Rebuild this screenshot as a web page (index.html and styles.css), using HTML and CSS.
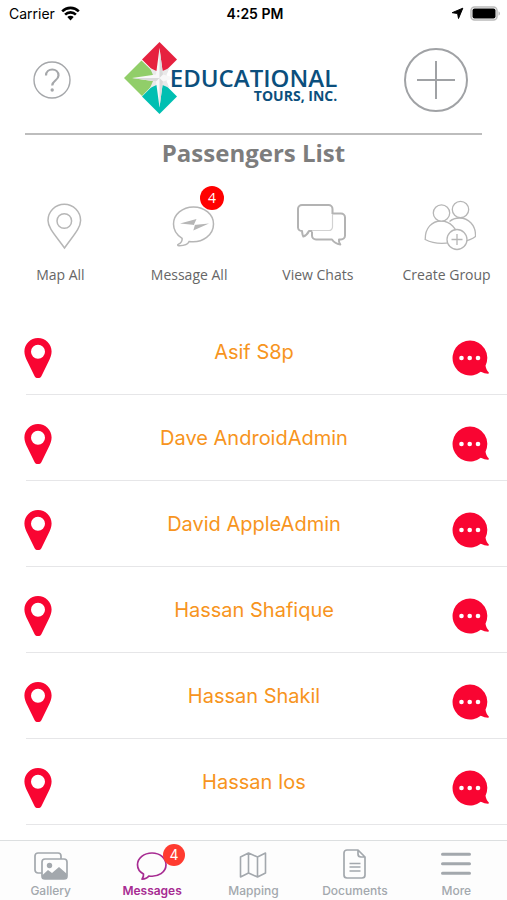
FILE: index.html
```html
<!DOCTYPE html>
<html lang="en">
<head>
<meta charset="utf-8">
<meta name="viewport" content="width=device-width, initial-scale=1">
<title>Passengers List</title>
<link rel="stylesheet" href="styles.css">
</head>
<body>
<svg class="defs" aria-hidden="true">
  <symbol id="pin" viewBox="0 0 28 42"><path fill-rule="evenodd" d="M14 1C6.500 1 .4 7 .4 14.400c0 3.200 1.400 6.600 2.900 9.900l7.200 14.600c1.400 2.900 5.600 2.900 7 0l7.200-14.600c1.500-3.300 2.900-6.700 2.900-9.900C27.600 7 21.500 1 14 1Zm0 6.800a7 7 0 1 1 0 14 7 7 0 0 1 0-14Z"/></symbol>
  <symbol id="chat" viewBox="0 0 38 36"><path d="M18 .5a17.500 17.500 0 1 0 10.800 31.300c2.500 1.200 5.100 2 7.200 2 .9 0 1.200-.8.600-1.500-1.600-1.700-2.600-4-3.100-6.600A17.500 17.500 0 0 0 18 .5Z"/><g fill="#fff"><circle cx="9.500" cy="18" r="2.300"/><circle cx="17.700" cy="18" r="2.300"/><circle cx="26" cy="18" r="2.300"/></g></symbol>
</svg>
<div class="screen">
  <div class="status">
    <div class="status-left"><span>Carrier</span>
      <svg width="19" height="15" viewBox="0 0 19 15"><g fill="none" stroke="#000" stroke-width="2.600"><path d="M1.200 5.300a11.800 11.800 0 0 1 16.600 0"/><path d="M4.100 8.600a7.700 7.700 0 0 1 10.800 0"/></g><path d="M9.500 14.400 6.300 11.100a4.600 4.600 0 0 1 6.400 0Z"/></svg>
    </div>
    <span class="clock">4:25 PM</span>
    <div class="status-right">
      <svg width="13" height="13" viewBox="0 0 13 13"><path stroke="#000" stroke-linejoin="round" d="M11.800 1.200 7.500 11.500 6.600 6.500 1.200 5.700Z"/></svg>
      <svg width="31" height="15" viewBox="0 0 31 15"><rect x="1" y="1" width="26" height="13" rx="3.500" fill="#fff" stroke="#bbb" stroke-width="1.500"/><rect x="2.500" y="2.500" width="23" height="10" rx="2"/><path d="M28.500 5.300c2 .8 2 3.600 0 4.400Z" fill="#bbb"/></svg>
    </div>
  </div>

  <header class="header">
    <button class="icon-button" aria-label="Help">
      <svg width="38" height="38" viewBox="0 0 38 38" fill="none" stroke="#a5a7aa"><circle cx="19" cy="19" r="18" stroke-width="1.400"/><path d="M13 14.500c0-8 12.500-8 12.500 0 0 5-6.300 5-6.300 10" stroke-width="2.200"/><circle cx="19.200" cy="29" r="1.700" fill="#a5a7aa" stroke="none"/></svg>
    </button>
    <div class="logo">
      <svg width="54" height="72" viewBox="0 0 54 72">
        <path fill="#e6213f" d="M35.500 0 53 17.500 35.500 35 18 17.500Z"/><path fill="#91ce69" d="M17.500 18.500 35.500 36 18 54 0 36Z"/><path fill="#00bfb2" d="M35.500 37 53 54.500 35.500 72 18 54.500Z"/>
        <path fill="#e9e9e9" d="m26 26 6.500 3 3-2 3 2 7-3-3 7 2 3-2 3 3 7-7-3-3 2-3-2-6.500 3 3-7-2-3 2-3Z"/>
        <path fill="#f8f8f8" d="M35.500 6 39 32.500 52 36l-13 3.500-3.500 26-3.500-26L8 36l24-3.500Z"/>
        <path fill="#dadada" d="M35.500 6v30l3.500-3.500ZM35.500 36 39 39.500l-3.500 26ZM8 36h27.500L32 39.500Z"/>
      </svg>
      <div class="wordmark"><span class="word-main">EDUCATIONAL</span><span class="word-sub">TOURS, INC.</span></div>
    </div>
    <button class="icon-button" aria-label="Add passenger">
      <svg width="64" height="64" viewBox="0 0 64 64" fill="none" stroke="#a0a2a5" stroke-width="2"><circle cx="32" cy="32" r="31"/><path d="M32 13v38M13 32h38"/></svg>
    </button>
  </header>
  <h1 class="title">Passengers List</h1>

  <nav class="actions" aria-label="Passenger actions">
    <button class="action">
      <svg width="54" height="54" viewBox="0 0 54 54" fill="none" stroke="#b6b6b6" stroke-width="1.500"><path d="M31.500 49C24 38 15 29.500 15 21.500a16.300 16.300 0 0 1 32.600 0C47.600 29.500 39 38 31.500 49Z"/><circle cx="31.300" cy="22" r="7.300"/></svg>
      <span>Map All</span>
    </button>
    <button class="action">
      <span class="icon-wrap"><svg width="54" height="54" viewBox="0 0 54 54" fill="none" stroke="#b6b6b6" stroke-width="1.500"><path d="M31.500 8C20.400 8 11.500 15.500 11.500 25c0 6 3.500 11.200 8.600 14.300.5 3-1.300 4.700-3.900 6-1 .5-.5 1.400.6 1.400 4 .1 8.700-.6 10.300-4.200 14.200 1.900 24.400-7 24.400-17.500C51.500 15.500 42.600 8 31.500 8Z"/><path fill="#b6b6b6" stroke="none" d="m18 24.500 16.500-4.400-2.700 6L47 24.500l-15.700 7.100 1.600-5.600Z"/></svg><span class="badge badge-action">4</span></span>
      <span>Message All</span>
    </button>
    <button class="action">
      <svg width="60" height="54" viewBox="0 0 60 54" fill="none" stroke="#b3b3b3" stroke-width="2" stroke-linejoin="round"><g transform="translate(5 -1)"><path d="M40 15.500h8a4 4 0 0 1 4 4v18a4 4 0 0 1-4 4h-2c-.4 2 .3 3.500 1.300 5-3.500-.6-6.500-2.300-8.300-5H23a4 4 0 0 1-4-4v-4"/><path d="M19 33v-.5h17a3.500 3.500 0 0 0 3.500-3.500V12" stroke="#d2d2d2" stroke-width="1.200"/><path d="M39.500 16v-5a4 4 0 0 0-4-4H9a4 4 0 0 0-4 4v18.500a4 4 0 0 0 4 3.500c.3 2 .3 3.800 1.300 5.500 2.500-.8 4.500-3 5.700-5.500h3"/></g></svg>
      <span>View Chats</span>
    </button>
    <button class="action">
      <svg width="58" height="54" viewBox="0 0 58 54" fill="#fff" stroke="#b6b6b6" stroke-width="1.300"><g transform="translate(6 -1)"><path d="M23 43c9 2 22 1 28.500-4.500C52 27 44.500 20 35.500 20c-4 0-7.600 1.400-10 3.500"/><circle cx="36.500" cy="11.500" r="8.200"/><path d="M1.200 41.500C1 30 8 23 17 23s17 8 17 18.500c-9.500 5.200-23 5.200-32.800 0Z"/><circle cx="17.500" cy="15" r="8.200"/><circle cx="33" cy="41.500" r="10"/><path d="M33 36v11M27.500 41.500h11"/></g></svg>
      <span>Create Group</span>
    </button>
  </nav>

  <main>
    <ul class="list">
      <li class="row"><button class="icon-button" aria-label="Locate Asif S8p"><svg class="pin"><use href="#pin"/></svg></button><a class="name" href="#">Asif S8p</a><button class="icon-button" aria-label="Chat with Asif S8p"><svg class="chat"><use href="#chat"/></svg></button></li>
      <li class="row"><button class="icon-button" aria-label="Locate Dave AndroidAdmin"><svg class="pin"><use href="#pin"/></svg></button><a class="name" href="#">Dave AndroidAdmin</a><button class="icon-button" aria-label="Chat with Dave AndroidAdmin"><svg class="chat"><use href="#chat"/></svg></button></li>
      <li class="row"><button class="icon-button" aria-label="Locate David AppleAdmin"><svg class="pin"><use href="#pin"/></svg></button><a class="name" href="#">David AppleAdmin</a><button class="icon-button" aria-label="Chat with David AppleAdmin"><svg class="chat"><use href="#chat"/></svg></button></li>
      <li class="row"><button class="icon-button" aria-label="Locate Hassan Shafique"><svg class="pin"><use href="#pin"/></svg></button><a class="name" href="#">Hassan Shafique</a><button class="icon-button" aria-label="Chat with Hassan Shafique"><svg class="chat"><use href="#chat"/></svg></button></li>
      <li class="row"><button class="icon-button" aria-label="Locate Hassan Shakil"><svg class="pin"><use href="#pin"/></svg></button><a class="name" href="#">Hassan Shakil</a><button class="icon-button" aria-label="Chat with Hassan Shakil"><svg class="chat"><use href="#chat"/></svg></button></li>
      <li class="row"><button class="icon-button" aria-label="Locate Hassan Ios"><svg class="pin"><use href="#pin"/></svg></button><a class="name" href="#">Hassan Ios</a><button class="icon-button" aria-label="Chat with Hassan Ios"><svg class="chat"><use href="#chat"/></svg></button></li>
    </ul>
  </main>

  <nav class="tabs" aria-label="Main">
    <a class="tab" href="#"><svg width="36" height="32" viewBox="0 0 36 32" fill="none" stroke="#a3a8ad" stroke-width="1.700"><path d="M9 24H5a3 3 0 0 1-3-3V7a3 3 0 0 1 3-3h20a3 3 0 0 1 3 3v3"/><rect x="9" y="10" width="25" height="20" rx="3"/><circle cx="16.500" cy="16.500" r="2.700" fill="#a3a8ad" stroke="none"/><path fill="#a3a8ad" stroke="none" d="M9 26.500 15 21l4 3 7-6 8 7v2a3 3 0 0 1-3 3H12a3 3 0 0 1-3-3Z"/></svg><span>Gallery</span></a>
    <a class="tab tab-active" href="#" aria-current="page"><span class="icon-wrap"><svg width="36" height="32" viewBox="0 0 36 32" fill="none" stroke="#a72c92" stroke-width="1.700" stroke-linejoin="round"><path d="M18 4C10 4 3.500 9 3.500 15.800c0 4 2.200 7.200 6 9.300.3 2-.5 3.500-1.500 5 3 0 5.500-1.300 6.800-3.100C24.500 28.500 32 23 32 15.800 32 9 26 4 18 4Z"/></svg><span class="badge badge-tab">4</span></span><span>Messages</span></a>
    <a class="tab" href="#"><svg width="36" height="32" viewBox="0 0 36 32" fill="none" stroke="#a3a8ad" stroke-width="1.600" stroke-linejoin="round"><path d="m5.500 8 8-4 9 4 8-4v20l-8 4-9-4-8 4ZM13.500 4v20M22.500 8v20"/></svg><span>Mapping</span></a>
    <a class="tab" href="#"><svg width="36" height="32" viewBox="0 0 36 32" fill="none" stroke="#a3a8ad" stroke-width="1.700" stroke-linejoin="round"><path d="M21 1H10a3 3 0 0 0-3 3v22a3 3 0 0 0 3 3h15a3 3 0 0 0 3-3V8ZM21 1v4a3 3 0 0 0 3 3h4M12.500 14.500h11M12.500 18h11M12.500 22h11"/></svg><span>Documents</span></a>
    <a class="tab" href="#"><svg width="36" height="32" viewBox="0 0 36 32" fill="none" stroke="#a3a8ad" stroke-width="3" stroke-linecap="round"><path d="M4.500 5.200h27M4.500 14.800h27M4.500 24.300h27"/></svg><span>More</span></a>
  </nav>
</div>
</body>
</html>
```
FILE: styles.css
```css
* {
  box-sizing: border-box;
}

body {
  margin: 0;
  background: #fff;
  font-family: Inter, "Liberation Sans", sans-serif;
  overflow-x: hidden;
}

button {
  padding: 0;
  border: 0;
  background: none;
  color: inherit;
  font: inherit;
}

a {
  color: inherit;
  text-decoration: none;
}

svg {
  display: block;
  flex: none;
}

.defs {
  position: absolute;
  width: 0;
  height: 0;
}

.screen {
  display: flex;
  flex-direction: column;
  min-height: 100vh;
}

.status {
  display: grid;
  grid-template-columns: 1fr auto 1fr;
  align-items: center;
  height: 27px;
  padding: 0 6px 0 9px;
  font-size: 14px;
}

.status-left,
.status-right {
  display: flex;
  align-items: center;
  gap: 6px;
}

.status-right {
  justify-content: flex-end;
}

.clock {
  font-weight: 600;
}

.header {
  display: grid;
  grid-template-columns: auto 1fr auto;
  align-items: center;
  height: 108px;
  margin: 0 25px;
  padding: 0 14px 0 8px;
  border-bottom: 2px solid #bdbdbd;
}

.logo {
  display: flex;
  align-items: center;
  justify-content: center;
  padding: 0 14px 4px 0;
  color: #0b4f7d;
  font-family: "Open Sans", sans-serif;
}

.wordmark {
  display: flex;
  flex-direction: column;
  align-items: flex-end;
  margin: 15px 0 0 -8px;
}

.word-main {
  font-size: 24px;
  font-weight: 600;
  line-height: 20px;
}

.word-sub {
  font-size: 14px;
  font-weight: 700;
  line-height: 16px;
}

.title {
  margin: 0;
  color: #7d7d7d;
  font-family: "Open Sans", sans-serif;
  font-size: 24px;
  font-weight: 700;
  line-height: 36px;
  text-align: center;
}

.actions {
  display: grid;
  grid-template-columns: repeat(4, 1fr);
  margin: 0 -4px;
  padding: 28px 0 24px;
  color: #666;
  font-family: "Open Sans", sans-serif;
  font-size: 14px;
  line-height: 20px;
}

.action {
  display: flex;
  flex-direction: column;
  align-items: center;
  gap: 12px;
}

.icon-wrap {
  position: relative;
}

.badge {
  position: absolute;
  display: grid;
  place-items: center;
  border-radius: 50%;
  color: #fff;
  font-size: 14px;
  font-weight: 400;
}

.badge-action {
  top: -13px;
  right: -8px;
  width: 24px;
  height: 24px;
  background: #f00;
}

.badge-tab {
  top: -5px;
  right: -15px;
  width: 22px;
  height: 22px;
  background: #ff3b30;
}

.list {
  margin: 0;
  padding: 0;
  list-style: none;
}

.row {
  display: grid;
  grid-template-columns: 30px 1fr 38px;
  align-items: center;
  height: 86px;
  margin-left: 26px;
  padding: 12px 17px 0 0;
  border-bottom: 1px solid #e6e6e8;
}

.pin {
  width: 28px;
  height: 42px;
  margin-left: -2px;
  fill: #f90532;
}

.chat {
  width: 38px;
  height: 36px;
  fill: #f90532;
}

.name {
  padding-bottom: 12px;
  color: #f79420;
  font-size: 20px;
  line-height: 26px;
  text-align: center;
}

.tabs {
  display: grid;
  grid-template-columns: repeat(5, 1fr);
  height: 60px;
  margin-top: auto;
  padding-top: 8px;
  border-top: 1px solid #dcdfe0;
  background: #fdfdfd;
  color: #a3a8ad;
  font-size: 12px;
  font-weight: 500;
  line-height: 16px;
}

.tab {
  display: flex;
  flex-direction: column;
  align-items: center;
  gap: 2px;
}

.tab-active {
  color: #a72c92;
  font-weight: 600;
}
```
